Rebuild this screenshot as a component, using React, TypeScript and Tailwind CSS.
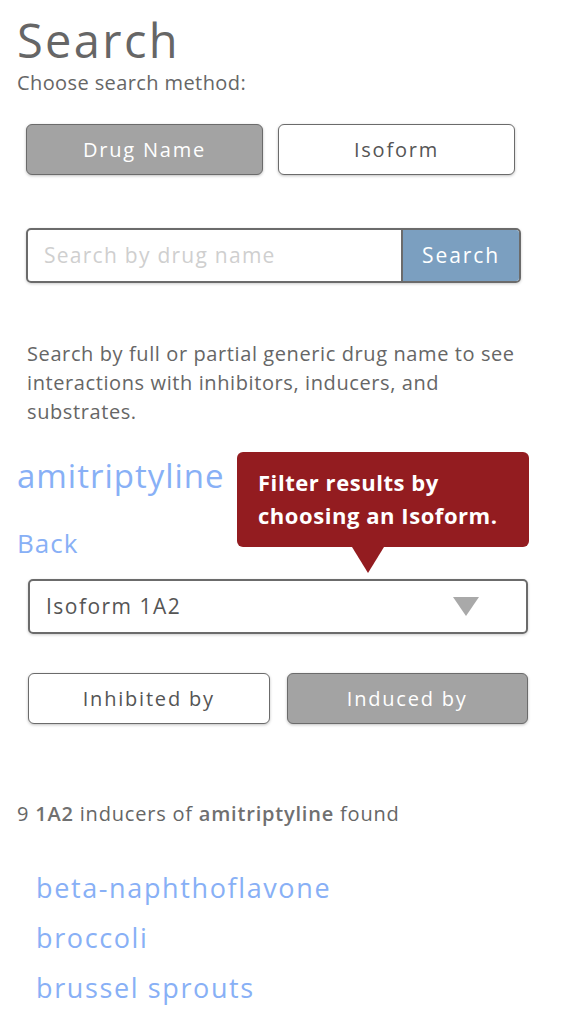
import { useState } from "react";

const results = ["beta-naphthoflavone", "broccoli", "brussel sprouts"];

function ToggleButton({
  label,
  active,
  onClick,
}: {
  label: string;
  active: boolean;
  onClick: () => void;
}) {
  return (
    <button
      onClick={onClick}
      className={
        active
          ? "flex-1 h-[51px] rounded-[6px] border border-[#6b6b6b] bg-[#a3a3a3] text-white text-[20px] tracking-[0.09em] shadow-[0_1px_3px_rgba(0,0,0,0.25)]"
          : "flex-1 h-[51px] rounded-[6px] border border-[#6b6b6b] bg-white text-[#555] text-[20px] tracking-[0.09em] shadow-[0_1px_3px_rgba(0,0,0,0.25)]"
      }
    >
      {label}
    </button>
  );
}

export default function App() {
  const [method, setMethod] = useState<"drug" | "isoform">("drug");
  const [mode, setMode] = useState<"inhibited" | "induced">("induced");

  return (
    <div className="min-h-[1013px] bg-white font-['Open_Sans',sans-serif] text-[#666]">
      <div className="px-[17px] pt-[12px]">
        <h1 className="text-[47px] leading-[56px] tracking-[0.05em] text-[#666]">Search</h1>
        <p className="mt-[2px] text-[20px] leading-[26px] tracking-[0.02em] text-[#666]">Choose search method:</p>
      </div>

      <div className="flex gap-[15px] pl-[26px] pr-[48px] mt-[28px]">
        <ToggleButton label="Drug Name" active={method === "drug"} onClick={() => setMethod("drug")} />
        <ToggleButton label="Isoform" active={method === "isoform"} onClick={() => setMethod("isoform")} />
      </div>

      <div className="ml-[26px] mr-[42px] mt-[53px] flex h-[55px] rounded-[5px] border-2 border-[#6b6b6b] overflow-hidden shadow-[0_1px_3px_rgba(0,0,0,0.2)]">
        <input
          placeholder="Search by drug name"
          className="flex-1 min-w-0 px-[16px] text-[21px] tracking-[0.06em] text-[#555] placeholder:text-[#cfcfcf] outline-none"
        />
        <button className="w-[118px] border-l-2 border-[#6b6b6b] bg-[#7b9fc0] text-white text-[21px] tracking-[0.09em]">
          Search
        </button>
      </div>

      <p className="mx-[27px] mt-[56px] text-[20px] leading-[29px] tracking-[0.03em] text-[#666]">
        Search by full or partial generic drug name to see interactions with inhibitors, inducers, and substrates.
      </p>

      <div className="relative px-[17px] mt-[28px]">
        <a className="block text-[33px] leading-[44px] text-[#88b0f6] tracking-[0.03em]">amitriptyline</a>
        <a className="block mt-[29px] text-[26px] leading-[32px] text-[#88b0f6] tracking-[0.04em]">Back</a>

        <div className="absolute left-[237px] top-[-2px] w-[292px] rounded-[6px] bg-[#931c20] px-[21px] pt-[14px] pb-[15px] text-white font-bold text-[22px] leading-[33px] tracking-[0.025em]">
          Filter results by
          <br />
          choosing an Isoform.
          <div className="absolute left-[115px] top-full h-0 w-0 border-l-[16px] border-r-[16px] border-t-[26px] border-l-transparent border-r-transparent border-t-[#931c20]" />
        </div>
      </div>

      <div className="ml-[28px] mr-[35px] mt-[20px] flex h-[55px] items-center justify-between rounded-[5px] border-2 border-[#6b6b6b] pl-[16px] pr-[47px] shadow-[0_1px_3px_rgba(0,0,0,0.2)]">
        <span className="text-[21px] tracking-[0.07em] text-[#555]">Isoform 1A2</span>
        <span className="h-0 w-0 border-l-[13px] border-r-[13px] border-t-[19px] border-l-transparent border-r-transparent border-t-[#a9a9a9]" />
      </div>

      <div className="flex gap-[17px] ml-[28px] mr-[35px] mt-[39px]">
        <ToggleButton label="Inhibited by" active={mode === "inhibited"} onClick={() => setMode("inhibited")} />
        <ToggleButton label="Induced by" active={mode === "induced"} onClick={() => setMode("induced")} />
      </div>

      <p className="px-[17px] mt-[76px] text-[20px] leading-[28px] tracking-[0.04em] text-[#666]">
        9 <span className="font-semibold text-[#707070]">1A2</span> inducers of{" "}
        <span className="font-semibold text-[#707070]">amitriptyline</span> found
      </p>

      <ul className="px-[36px] mt-[35px]">
        {results.map((r) => (
          <li key={r} className="text-[27px] leading-[50px] tracking-[0.06em] text-[#88b0f6]">
            <a>{r}</a>
          </li>
        ))}
      </ul>
    </div>
  );
}
